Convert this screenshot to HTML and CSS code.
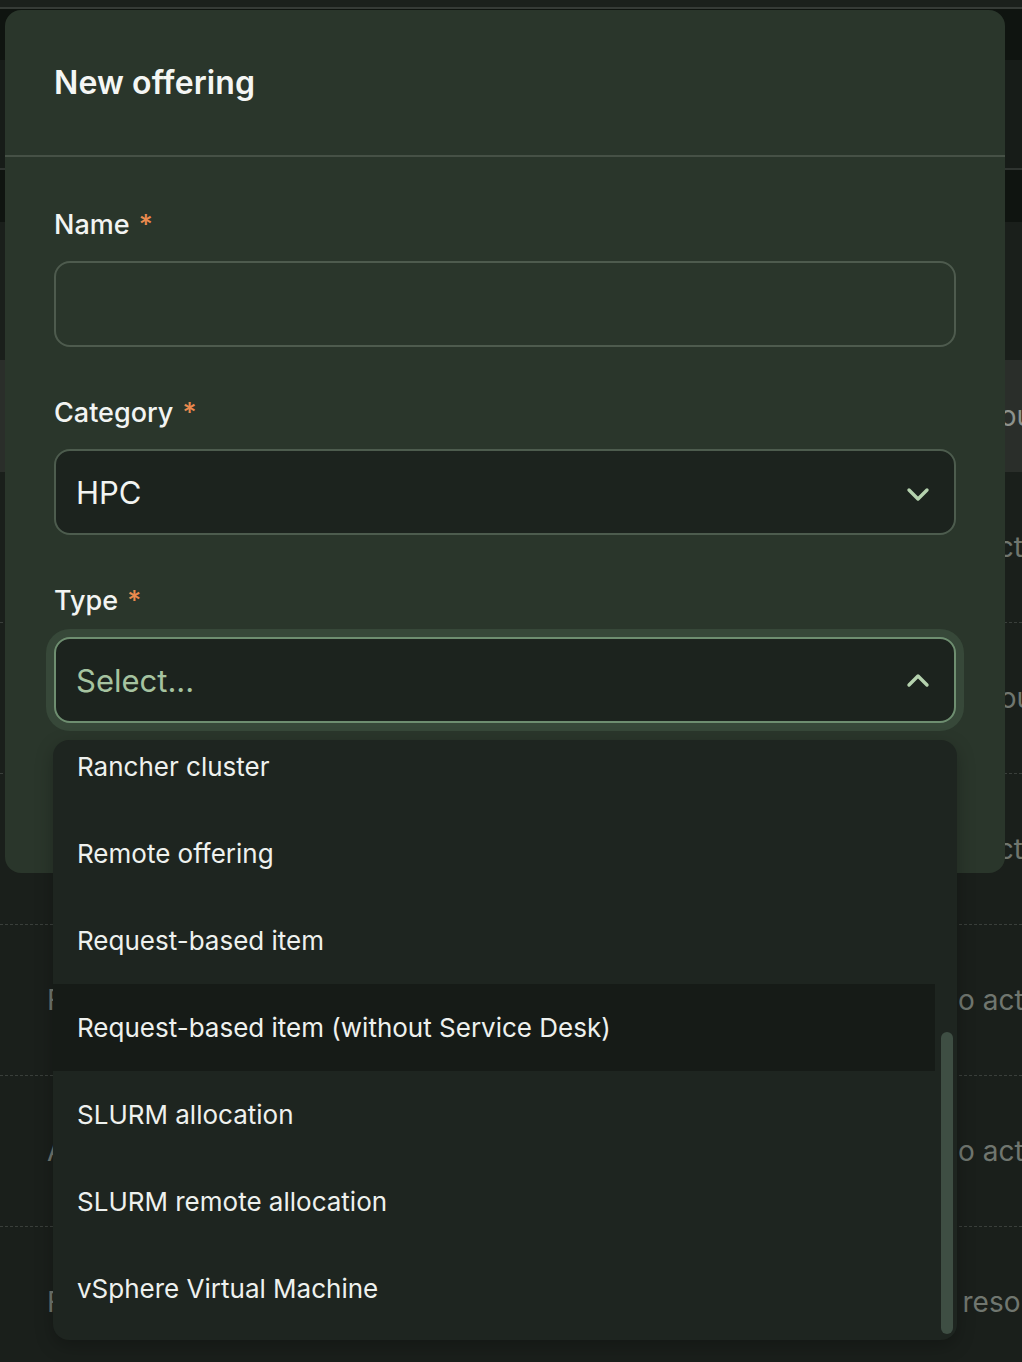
FILE: index.html
```html
<!DOCTYPE html>
<html lang="en">
<head>
<meta charset="utf-8">
<title>New offering</title>
<link rel="stylesheet" href="styles.css">
</head>
<body>
<div class="page">
  <div class="topbar"></div>
  <div class="topline"></div>
  <div class="band band-dark"></div>
  <div class="band band-mid"></div>
  <div class="band band-line"></div>
  <div class="band band-dark2"></div>
  <div class="band band-plain"></div>
  <div class="table">
    <div class="thead"><span class="c1">Name</span><span class="c2 c2-shift">Resources</span></div>
    <div class="trow"><span class="c1">Fast storage</span><span class="c2 c2-pull">Project</span></div>
    <div class="trow"><span class="c1">Allocation</span><span class="c2 c2-shift">Resources</span></div>
    <div class="trow"><span class="c1">Fast compute</span><span class="c2 c2-pull">Project</span></div>
    <div class="trow"><span class="c1">Flex cluster</span><span class="c2">No actions</span></div>
    <div class="trow"><span class="c1">Archive</span><span class="c2">No actions</span></div>
    <div class="trow"><span class="c1">Fileshare</span><span class="c2">0 resources</span></div>
  </div>
</div>

<div class="modal">
  <div class="modal-header">
    <h2 class="modal-title">New offering</h2>
  </div>
  <div class="modal-body">
    <div class="field">
      <label class="field-label">Name <span class="req">*</span></label>
      <div class="text-input"></div>
    </div>
    <div class="field">
      <label class="field-label">Category <span class="req">*</span></label>
      <div class="select">
        <span class="select-value">HPC</span>
        <svg class="chevron" width="24" height="16" viewBox="0 0 24 16"><path d="M3 3 L12 12 L21 3" fill="none" stroke="currentColor" stroke-width="3.4" stroke-linecap="round" stroke-linejoin="round"/></svg>
      </div>
    </div>
    <div class="field">
      <label class="field-label">Type <span class="req">*</span></label>
      <div class="select-wrap">
        <div class="select select-focus">
          <span class="select-placeholder">Select...</span>
          <svg class="chevron chevron-up" width="24" height="16" viewBox="0 0 24 16"><path d="M3 13 L12 4 L21 13" fill="none" stroke="currentColor" stroke-width="3.4" stroke-linecap="round" stroke-linejoin="round"/></svg>
        </div>
        <div class="menu">
          <div class="menu-list">
            <div class="menu-item">Rancher cluster</div>
            <div class="menu-item">Remote offering</div>
            <div class="menu-item">Request-based item</div>
            <div class="menu-item is-active">Request-based item (without Service Desk)</div>
            <div class="menu-item">SLURM allocation</div>
            <div class="menu-item">SLURM remote allocation</div>
            <div class="menu-item">vSphere Virtual Machine</div>
          </div>
          <div class="scroll-thumb"></div>
        </div>
      </div>
    </div>
  </div>
</div>
</body>
</html>
```
FILE: styles.css
```css
* { box-sizing: border-box; }

body {
  margin: 0;
  width: 1022px;
  height: 1362px;
  overflow: hidden;
  position: relative;
  background: #1a1f1b;
  font-family: Inter, "Noto Sans", sans-serif;
  color: #eef1ee;
}

/* background page (dimmed) */
.page { display: flex; flex-direction: column; }
.topbar { height: 7px; background: #1b201c; }
.topline { height: 2px; background: #363b37; }
.band-dark { height: 51px; background: #0f1410; }
.band-mid { height: 108px; background: #171c18; }
.band-line { height: 2px; background: #2f3430; }
.band-dark2 { height: 52px; background: #0f1410; }
.band-plain { height: 138px; background: #1a1f1b; }

.table { display: flex; flex-direction: column; }
.thead, .trow {
  display: grid;
  grid-template-columns: 890px 1fr;
  align-items: center;
  padding-left: 47px;
  font-size: 28px;
  white-space: nowrap;
  overflow: hidden;
}
.thead { height: 112px; background: #2a2e2a; color: #8d928d; }
.trow { height: 151px; border-bottom: 1.5px dashed #3a3f3b; color: #70766f; }
.c2-shift { padding-left: 14px; }
.c2-pull { margin-left: -7px; }

/* modal */
.modal {
  position: absolute;
  left: 5px;
  top: 10px;
  width: 1000px;
  height: 863px;
  background: #2a362b;
  border-radius: 16px;
}
.modal-header {
  height: 147px;
  border-bottom: 2px solid #465146;
  padding: 0 49px;
  display: flex;
  align-items: center;
}
.modal-title {
  margin: 0;
  font-size: 32px;
  font-weight: 600;
  color: #f4f6f4;
  letter-spacing: 0.1px;
}
.modal-body {
  padding: 50px 49px 0;
  display: flex;
  flex-direction: column;
  gap: 48px;
}
.field { display: flex; flex-direction: column; }
.field-label {
  height: 36px;
  line-height: 36px;
  font-size: 27px;
  font-weight: 500;
  color: #f2f4f2;
  margin-bottom: 18px;
}
.req { color: #ea8a4e; margin-left: 2px; }

.text-input {
  height: 86px;
  border: 2px solid #4e5b4e;
  border-radius: 16px;
}

.select {
  height: 86px;
  border: 2px solid #4d5c4e;
  border-radius: 16px;
  background: #1c231e;
  display: flex;
  align-items: center;
  justify-content: space-between;
  padding: 0 24px 0 20px;
  font-size: 31px;
}
.select-value { color: #f2f4f2; }
.select-placeholder { color: #a6c3a0; }
.chevron { color: #b5d2ae; display: block; margin-top: 5px; }
.chevron-up { margin-top: 0; }

.select-wrap { position: relative; }
.select-focus {
  border-color: #6e8e70;
  box-shadow: 0 0 0 8px #374839;
}

.menu {
  position: absolute;
  left: -1px;
  top: 103px;
  width: 904px;
  height: 600px;
  background: #1e2520;
  border-radius: 16px;
  overflow: hidden;
  box-shadow: 0 6px 18px rgba(0, 0, 0, 0.25);
}
.menu-list {
  width: 882px;
  margin-top: -17px;
  display: flex;
  flex-direction: column;
}
.menu-item {
  height: 87px;
  display: flex;
  align-items: center;
  padding-left: 24px;
  font-size: 26px;
  color: #eef1ee;
  white-space: nowrap;
}
.menu-item.is-active { background: #161b17; }
.scroll-thumb {
  position: absolute;
  right: 4px;
  top: 292px;
  width: 12px;
  height: 302px;
  border-radius: 6px;
  background: #3e4e43;
}
```
